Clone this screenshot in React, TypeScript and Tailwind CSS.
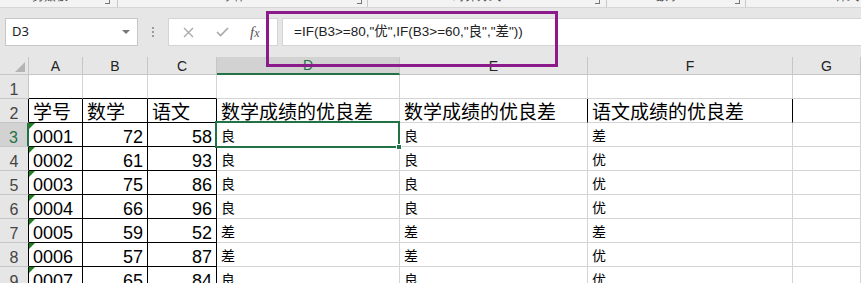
import React from 'react'

const font = "font-['Liberation_Sans','Noto_Sans_CJK_SC',sans-serif]"

const rows: [string, number, number, string, string, string][] = [
  ['0001', 72, 58, '良', '良', '差'],
  ['0002', 61, 93, '良', '良', '优'],
  ['0003', 75, 86, '良', '良', '优'],
  ['0004', 66, 96, '良', '良', '优'],
  ['0005', 59, 52, '差', '差', '差'],
  ['0006', 57, 87, '差', '差', '优'],
  ['0007', 65, 84, '良', '良', '优'],
]

const cols = ['A', 'B', 'C', 'D', 'E', 'F', 'G']

const RibbonGroups = () => {
  const groups = [
    { label: '剪贴板', text: 'left-[32px]', icon: 'left-[105px]', sep: 'left-[117px]' },
    { label: '字体', text: 'left-[222px]', icon: 'left-[357px]', sep: 'left-[367px]' },
    { label: '对齐方式', text: 'left-[453px]', icon: 'left-[595px]', sep: 'left-[606px]' },
    { label: '数字', text: 'left-[656px]', icon: 'left-[735px]', sep: 'left-[745px]' },
    { label: '样式', text: 'left-[835px]', icon: '', sep: '' },
  ]
  return (
    <div className="relative h-[8px] bg-[#f3f3f3] border-b border-[#d6d6d6] overflow-hidden">
      {groups.map((g) => (
        <React.Fragment key={g.label}>
          <span className={`absolute ${g.text} -top-[10px] text-[12px] leading-none text-[#444]`}>{g.label}</span>
          {g.icon && <span className={`absolute ${g.icon} top-0 w-[5px] h-[4px] border-r border-b border-[#777]`} />}
          {g.sep && <span className={`absolute ${g.sep} top-0 h-[7px] w-px bg-[#c8c8c8]`} />}
        </React.Fragment>
      ))}
    </div>
  )
}

const FormulaBar = () => (
  <div className="h-[49px] bg-[#e6e6e6] pt-[10px]">
    <div className="flex h-[28px] items-stretch">
      {/* name box */}
      <div className="ml-[5px] w-[133px] bg-white border border-[#c6c6c6] flex items-center pl-[6px] pr-[6px] justify-between">
        <span className="text-[13px] text-[#222]">D3</span>
        <span className="w-0 h-0 border-l-[4px] border-r-[4px] border-t-[4px] border-l-transparent border-r-transparent border-t-[#777] mr-[1px]" />
      </div>
      <div className="w-[30px] flex flex-col items-center justify-center gap-[2px]">
        <span className="w-[2px] h-[2px] bg-[#9a9a9a]" />
        <span className="w-[2px] h-[2px] bg-[#9a9a9a]" />
        <span className="w-[2px] h-[2px] bg-[#9a9a9a]" />
      </div>
      {/* buttons */}
      <div className="w-[110px] bg-white border border-[#d4d4d4] flex items-center">
        <svg className="ml-[14px]" width="11" height="11" viewBox="0 0 11 11">
          <path d="M1 1L10 10M10 1L1 10" stroke="#a8a8a8" strokeWidth="1.3" fill="none" />
        </svg>
        <svg className="ml-[22px]" width="13" height="10" viewBox="0 0 13 10">
          <path d="M1 5L4.5 8.5L12 1" stroke="#a8a8a8" strokeWidth="1.6" fill="none" />
        </svg>
        <span className="ml-[21px] text-[15px] italic font-['Liberation_Serif',serif] text-[#555] leading-none">
          f<span className="text-[12px]">x</span>
        </span>
      </div>
      {/* formula input */}
      <div className="ml-[4px] flex-1 bg-white border-y border-l border-[#d4d4d4] flex items-center pl-[11px]">
        <span className={`${font} text-[13.5px] text-[#222] whitespace-nowrap`}>
          =IF(B3&gt;=80,"优",IF(B3&gt;=60,"良","差"))
        </span>
      </div>
    </div>
  </div>
)

const HeaderRow = () => (
  <>
    <div className="relative h-[18px] bg-[#e6e6e6] border-r border-b border-[#c6c6c6]">
      <svg className="absolute right-[3px] bottom-[2px]" width="10" height="10" viewBox="0 0 10 10">
        <path d="M10 0L10 10L0 10Z" fill="#b4b4b4" />
      </svg>
    </div>
    {cols.map((c) =>
      c === 'D' ? (
        <div
          key={c}
          className="h-[18px] bg-[#d2d2d2] border-r border-[#c6c6c6] border-b-2 border-b-[#217346] flex items-center justify-center text-[14px] leading-none text-[#217346] font-['Liberation_Sans',sans-serif]"
        >
          {c}
        </div>
      ) : (
        <div
          key={c}
          className="h-[18px] bg-[#e6e6e6] border-r border-b border-[#c6c6c6] flex items-center justify-center text-[14px] leading-none text-[#222] font-['Liberation_Sans',sans-serif]"
        >
          {c}
        </div>
      ),
    )}
  </>
)

const RowHead = ({ n, selected, table }: { n: number; selected?: boolean; table?: boolean }) => (
  <div
    className={`h-[24px] flex items-end justify-center border-b border-b-[#c6c6c6] text-[16px] leading-none font-['Liberation_Sans',sans-serif] ${
      selected
        ? 'bg-[#d2d2d2] text-[#217346] border-r-2 border-r-[#217346]'
        : table
          ? 'bg-[#e6e6e6] text-[#444] border-r border-r-black'
          : 'bg-[#e6e6e6] text-[#444] border-r border-r-[#c6c6c6]'
    }`}
  >
    {n}
  </div>
)

const Cell = ({
  children,
  right,
  bottom,
  align = 'left',
  size = 'big',
  extra = '',
}: {
  children?: React.ReactNode
  right?: boolean
  bottom?: boolean
  align?: 'left' | 'right'
  size?: 'big' | 'num' | 'small'
  extra?: string
}) => (
  <div
    className={`relative h-[24px] flex items-end overflow-visible whitespace-nowrap leading-none text-black ${font} border-r border-b ${
      right ? 'border-r-black' : 'border-r-[#d4d4d4]'
    } ${bottom ? 'border-b-black' : 'border-b-[#d4d4d4]'} ${
      align === 'right' ? 'justify-end pr-[4px]' : 'pl-[4px]'
    } ${size === 'big' ? 'text-[19px]' : size === 'num' ? 'text-[18px]' : 'text-[14px] pb-[3px]'} ${extra}`}
  >
    {children}
  </div>
)

const Triangle = () => (
  <span className="absolute left-0 top-0 w-0 h-0 border-t-[6px] border-r-[6px] border-t-[#1d7f1d] border-r-transparent" />
)

export default function App() {
  return (
    <div className="w-[861px] h-[283px] overflow-hidden bg-white relative">
      <RibbonGroups />
      <FormulaBar />
      <div className="grid grid-cols-[29px_54px_65px_69px_183px_188px_205px_1fr]">
        <HeaderRow />

        {/* row 1 */}
        <RowHead n={1} />
        <Cell bottom />
        <Cell bottom />
        <Cell bottom />
        <Cell />
        <Cell />
        <Cell />
        <Cell />

        {/* row 2 */}
        <RowHead n={2} table />
        <Cell right bottom>学号</Cell>
        <Cell right bottom>数学</Cell>
        <Cell right bottom>语文</Cell>
        <Cell>数学成绩的优良差</Cell>
        <Cell right>数学成绩的优良差</Cell>
        <Cell right>语文成绩的优良差</Cell>
        <Cell />

        {rows.map((r, i) => (
          <React.Fragment key={r[0]}>
            <RowHead n={i + 3} selected={i === 0} table />
            <Cell right bottom size="num">
              <Triangle />
              {r[0]}
            </Cell>
            <Cell right bottom size="num" align="right">
              {r[1]}
            </Cell>
            <Cell right bottom size="num" align="right">
              {r[2]}
            </Cell>
            <Cell size="small">
              {i === 0 && (
                <span className="absolute left-[-2px] top-[-2px] w-[185px] h-[27px] border-2 border-[#217346] z-10">
                  <span className="absolute right-[-4px] bottom-[-4px] w-[6px] h-[6px] bg-[#217346] border border-white" />
                </span>
              )}
              {r[3]}
            </Cell>
            <Cell size="small">{r[4]}</Cell>
            <Cell size="small">{r[5]}</Cell>
            <Cell />
          </React.Fragment>
        ))}
      </div>

      {/* annotation box */}
      <div className="absolute left-[266px] top-[11px] w-[292px] h-[56px] border-[3px] border-[#8b1a8b] z-20" />
    </div>
  )
}
